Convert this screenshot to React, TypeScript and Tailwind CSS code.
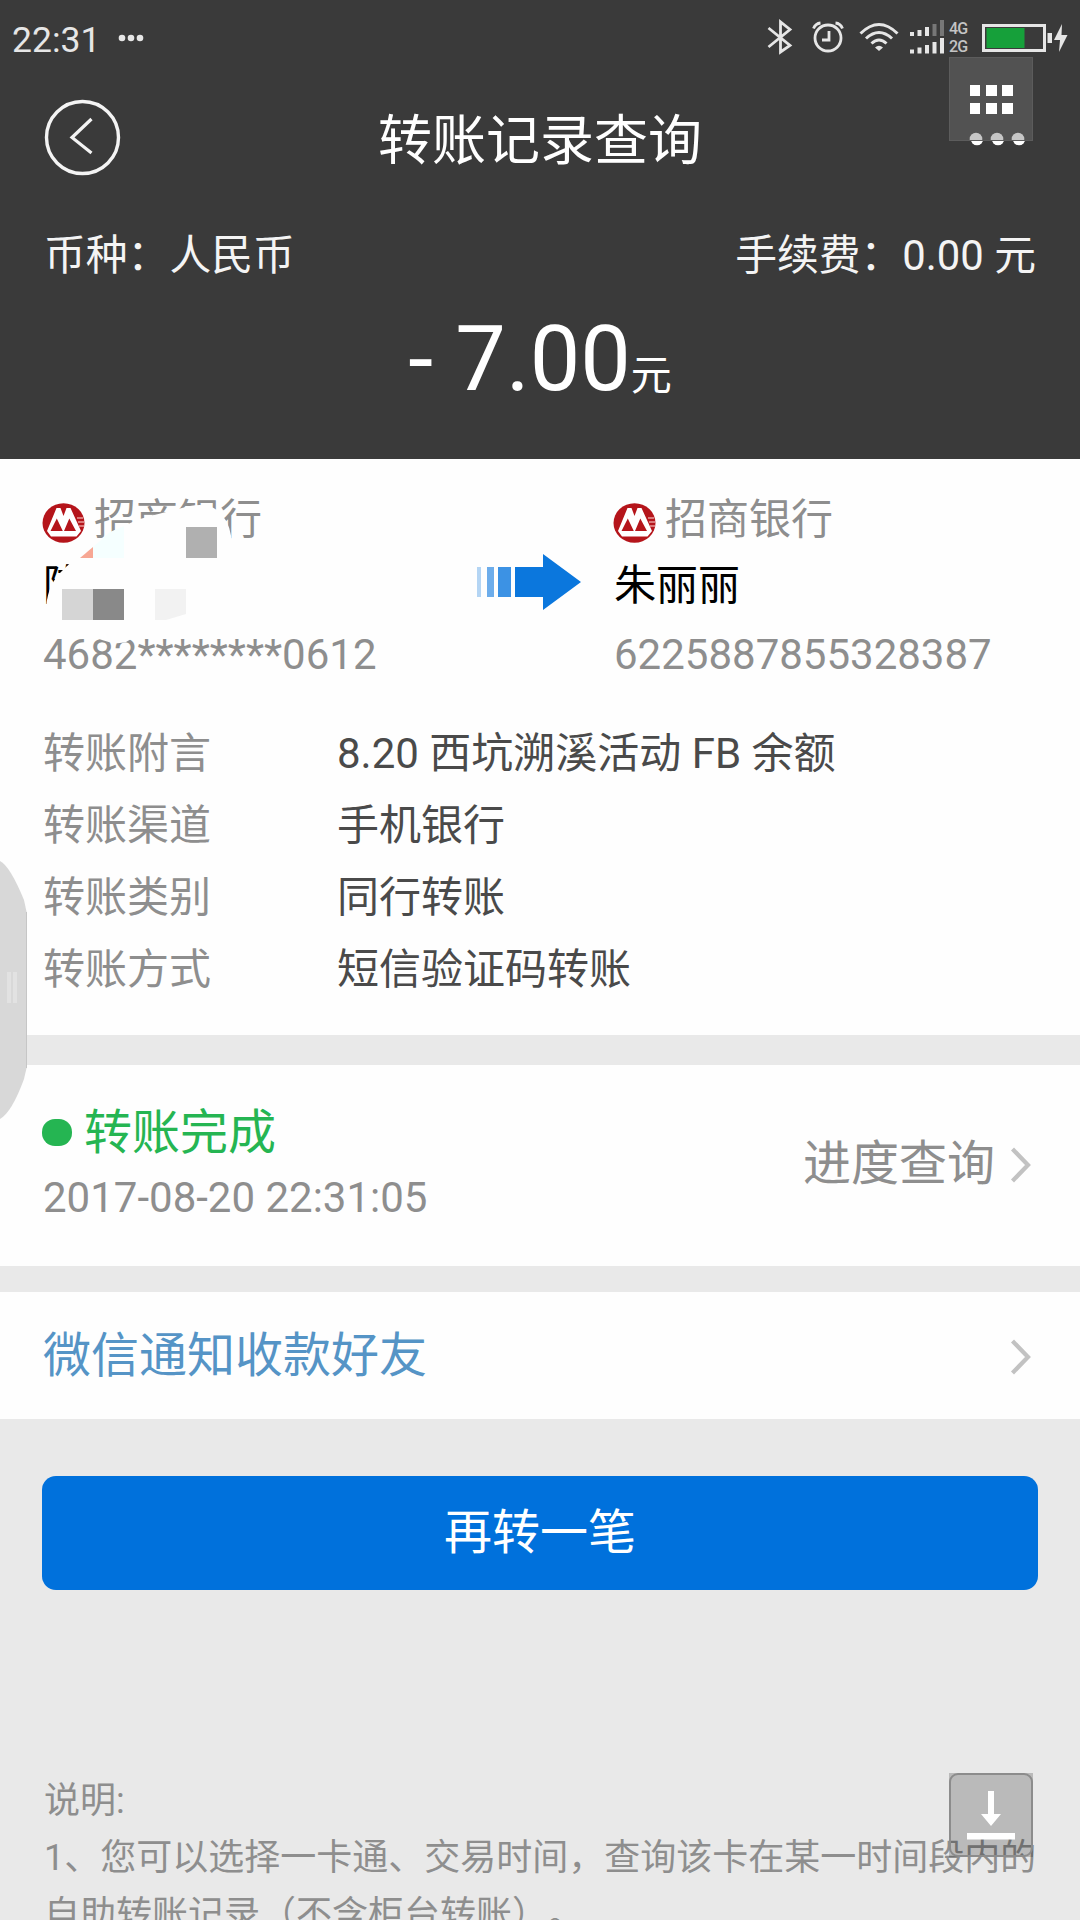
import type { ReactNode } from "react";

const details = [
  { label: "转账附言", value: "8.20 西坑溯溪活动 FB 余额" },
  { label: "转账渠道", value: "手机银行" },
  { label: "转账类别", value: "同行转账" },
  { label: "转账方式", value: "短信验证码转账" },
];

function StatusBar() {
  return (
    <div className="flex h-[76px] items-start justify-between text-[#e6e6e6]">
      <div className="flex items-center pl-[12px] pt-[19px]">
        <span className="text-[35.5px] leading-[42px]">22:31</span>
        <svg className="ml-[17px] -mt-[4px]" width="28" height="8" fill="currentColor">
          <circle cx="5" cy="4" r="3.3" />
          <circle cx="14" cy="4" r="3.3" />
          <circle cx="23" cy="4" r="3.3" />
        </svg>
      </div>
      <div className="flex pr-[10px] pt-[16px]">
        <svg width="28" height="44" viewBox="766 16 28 44" fill="none" stroke="currentColor" strokeWidth="2.8">
          <path d="M768.5 28 790 45.500 780.500 52V22l9.500 7.500L768.500 47" />
        </svg>
        <svg className="ml-[17px]" width="34" height="44" viewBox="811 16 34 44" fill="none" stroke="currentColor" strokeWidth="2.8">
          <circle cx="828" cy="38" r="13" />
          <path d="M829 31v9h-7M813.500 28.500q2-5 7-5.500M842.500 28.500q-2-5-7-5.500" />
        </svg>
        <svg className="ml-[13px]" width="42" height="44" viewBox="858 16 42 44" fill="none" stroke="currentColor" strokeWidth="3">
          <path d="M860.500 33.500q18.500-18 37 0M866 38.500q13-12 26 0M871.500 43.500q7.500-7 15 0" />
          <path d="M875 47.500q4-3.500 8 0l-4 3.500z" fill="currentColor" stroke="none" />
        </svg>
        <svg className="ml-[10px]" width="36" height="44" viewBox="910 16 36 44" fill="currentColor">
          <path d="M910 32h4v4h-4zM917.500 30h4v6h-4zM925 27h4v9h-4z" />
          <path d="M932.500 24h4v12h-4zM940 20h4v16h-4z" fill="#777" />
          <path d="M910 49.500h4v4h-4zM917.500 47.500h4v6h-4zM925 45h4v8.500h-4zM932.500 42h4v11.500h-4zM940 38h4v15.500h-4z" />
        </svg>
        <div className="ml-[3px] flex w-[21px] flex-col pt-[4px] text-[16px] font-medium leading-[18px] tracking-[-0.8px] text-[#c4c4c4]">
          <span>4G</span>
          <span>2G</span>
        </div>
        <svg className="ml-[11px]" width="89" height="44" viewBox="981 16 89 44" fill="currentColor">
          <path d="M983.500 25.500h61v25h-61z" fill="none" stroke="currentColor" strokeWidth="3" />
          <path d="M986.500 28h38v20h-38z" fill="#16a03a" />
          <path d="M1047.500 33h4.500v10h-4.500z" />
          <path d="M1062 24l-8 16h6l-1 12 8.500-17h-6z" />
        </svg>
      </div>
    </div>
  );
}

function BankLogo() {
  return (
    <svg className="shrink-0" width="43" height="40" viewBox="0 0 43 40">
      <ellipse cx="21.500" cy="20" rx="21" ry="19.700" fill="#b5151b" />
      <path d="M5 28 14.500 5h4l3 8L24.500 5h4L39 28l-4.500 5.500H9z" fill="#fff" />
      <path d="M8.500 28 14.800 15.500 20.800 28zM22 28 27.300 15.500 34 28z" fill="#b5151b" />
      <path d="M35 15h6M36 19h6M37 23h5" stroke="#e79a9a" strokeWidth="1.500" />
    </svg>
  );
}

function Account({ name, number }: { name: string; number: string }) {
  return (
    <div className="flex flex-col text-[42px] leading-[50px]">
      <div className="-ml-px flex items-center text-[#8e8e8e]">
        <BankLogo />
        <span className="ml-[9px] -mt-[5px]">招商银行</span>
      </div>
      <span className="mt-[16px] text-black">{name}</span>
      <span className="mt-[19px] text-[#8e8e8e]">{number}</span>
    </div>
  );
}

function TransferArrow() {
  return (
    <svg width="106" height="56" viewBox="477 554 106 56" fill="#0b77dd">
      <path d="M477 567h4v30h-4z" opacity=".3" />
      <path d="M487 567h7v30h-7z" opacity=".6" />
      <path d="M498 567h13v30h-13z" opacity=".8" />
      <path d="M515 567h28v-13l38 28-38 28v-13h-28z" />
    </svg>
  );
}

// Pixelated patch that hides the payer's name
function Mosaic() {
  return (
    <svg className="absolute left-0 top-[40px]" width="260" height="150" viewBox="0 499 260 150">
      <path
        d="M46 612Q46 588 60 573Q72 560 92 547Q110 530 140 519Q165 512 190 506Q212 502 222 515Q231 525 232 545L226 570L186 614L150 628L126 642Q115 645 102 640L60 624Z"
        fill="#fefefe"
      />
      <path d="M93 547 110 532 124 526V558H93z" fill="#f5ffff" />
      <path d="M80 558 93 547V558z" fill="#f7a794" />
      <path d="M186 527h31v31h-31z" fill="#b0b0b0" />
      <path d="M62 589h31v31h-31z" fill="#d5d5d5" />
      <path d="M93 589h31v31h-31z" fill="#898989" />
      <path d="M155 589h31v25l-20 6h-11z" fill="#f2f2f2" />
    </svg>
  );
}

function Chevron() {
  return (
    <svg width="23" height="38" viewBox="0 0 23 38" fill="none" stroke="#c2c2c2" strokeWidth="4.200">
      <path d="M3.500 3 19 19 3.500 35" />
    </svg>
  );
}

function Section({ className, children }: { className: string; children: ReactNode }) {
  return <section className={`relative shrink-0 bg-[#fefefe] ${className}`}>{children}</section>;
}

export default function App() {
  return (
    <div
      lang="zh-CN"
      className="relative flex h-[1920px] w-[1080px] flex-col overflow-hidden bg-[#e9e9e9] font-['Roboto','Noto_Sans_CJK_SC',sans-serif]"
    >
      <header className="h-[459px] shrink-0 bg-[#3a3a3a] text-white">
        <StatusBar />
        <div className="flex h-[124px] items-center justify-between px-[44px]">
          <button type="button" aria-label="返回" className="-mt-[2px]">
            <svg width="77" height="77" viewBox="44 99 77 77" fill="none" stroke="#f4f4f4" strokeWidth="3.400">
              <circle cx="82.500" cy="137.500" r="36" />
              <path d="M91.500 119 72 137.500 91.500 153" strokeWidth="3.200" />
            </svg>
          </button>
          <h1 className="pt-[7px] text-[54px] leading-[64px]">转账记录查询</h1>
          <div className="flex w-[77px] justify-end pr-[10px] pt-[2px]">
            <svg width="56" height="14" fill="#fff">
              <circle cx="7" cy="7" r="6.300" />
              <circle cx="28" cy="7" r="6.300" />
              <circle cx="49" cy="7" r="6.300" />
            </svg>
          </div>
        </div>
        <div className="flex justify-between px-[44px] pt-[31px] text-[41.8px] leading-[50px] text-[#f4f4f4]">
          <span>币种：人民币</span>
          <span>手续费：0.00 元</span>
        </div>
        <div className="mt-[25px] flex items-baseline justify-center text-[90px] leading-[108px]">
          <span>- 7.00</span>
          <span className="text-[41px]">元</span>
        </div>
      </header>

      <Section className="h-[576px]">
        <div className="grid grid-cols-[434px_137px_1fr] px-[43px] pt-[41px]">
          <Account name="陈" number="4682********0612" />
          <div className="pt-[54px]">
            <TransferArrow />
          </div>
          <Account name="朱丽丽" number="6225887855328387" />
        </div>
        <Mosaic />
        <dl className="mt-[38px] grid grid-cols-[294px_1fr] px-[43px] text-[42px] leading-[72px]">
          {details.map((row) => (
            <div key={row.label} className="contents">
              <dt className="text-[#8e8e8e]">{row.label}</dt>
              <dd className="text-[#4a4a4a]">{row.value}</dd>
            </div>
          ))}
        </dl>
      </Section>

      <Section className="mt-[30px] flex h-[201px] justify-between pl-[42px] pr-[48px]">
        <div className="pt-[39px]">
          <div className="flex items-center text-[48px] leading-[58px] text-[#25b552]">
            <span className="-mt-[2px] h-[27px] w-[30px] rounded-[13px] bg-[#25b552]" />
            <span className="ml-[12px]">转账完成</span>
          </div>
          <div className="mt-[11px] pl-px text-[42px] leading-[50px] text-[#8e8e8e]">2017-08-20 22:31:05</div>
        </div>
        <div className="flex h-[200px] items-center text-[48px] leading-[58px] text-[#8e8e8e]">
          <span className="-mt-[3px]">进度查询</span>
          <span className="ml-[14px]">
            <Chevron />
          </span>
        </div>
      </Section>

      <Section className="mt-[26px] flex h-[127px] items-center justify-between pl-[43px] pr-[48px] text-[48px] text-[#5594c6]">
        <span>微信通知收款好友</span>
        <span className="pt-[2px]">
          <Chevron />
        </span>
      </Section>

      <button type="button" className="mx-[42px] mt-[57px] h-[114px] shrink-0 rounded-[14px] bg-[#0071dc] text-[48px] text-white">
        再转一笔
      </button>

      <div className="mt-[183px] w-[1010px] shrink-0 whitespace-nowrap pl-[44px] text-[36px] leading-[57px] text-[#8e8e8e] [text-spacing-trim:space-all]">
        <p>说明:</p>
        <p>1、您可以选择一卡通、交易时间，查询该卡在某一时间段内的</p>
        <p>自助转账记录（不含柜台转账）。</p>
      </div>

      {/* Drawer handle on the screen edge */}
      <svg className="absolute left-0 top-[860px]" width="30" height="262" viewBox="0 860 30 262">
        <path d="M0 861Q10 866 24 900L27 914V1066L24 1079Q12 1112 0 1119z" fill="#d8d8d8" />
        <path d="M26.500 912V1068" stroke="#c6c6c6" />
        <path d="M7 972h4v31h-4zM13 972h4v31h-4z" fill="#e2e2e2" />
      </svg>

      <div className="absolute left-[949px] top-[57px] h-[84px] w-[84px] border border-[#5c5c5c] bg-[#525252]">
        <svg width="82" height="82" viewBox="950 58 82 82" fill="#fff">
          <path d="M970 85h10v11h-10zM986 85h11v11h-11zM1002 85h11v11h-11zM970 103h10v11h-10zM986 103h11v11h-11zM1002 103h11v11h-11z" />
          <g fill="#c6c6c6">
            <circle cx="976" cy="139" r="6.300" />
            <circle cx="997" cy="139" r="6.300" />
            <circle cx="1018" cy="139" r="6.300" />
          </g>
        </svg>
      </div>
      <div className="absolute left-[949px] top-[1773px] h-[84px] w-[84px] bg-black/20">
        <svg width="84" height="84" viewBox="949 1773 84 84">
          <rect x="950" y="1774" width="82" height="82" rx="8" fill="none" stroke="#8c8c8c" strokeWidth="2" />
          <path d="M988 1791h6v23h7l-10 12-10-12h7zM967 1833h48v6.500h-48z" fill="#fff" />
        </svg>
      </div>
    </div>
  );
}
